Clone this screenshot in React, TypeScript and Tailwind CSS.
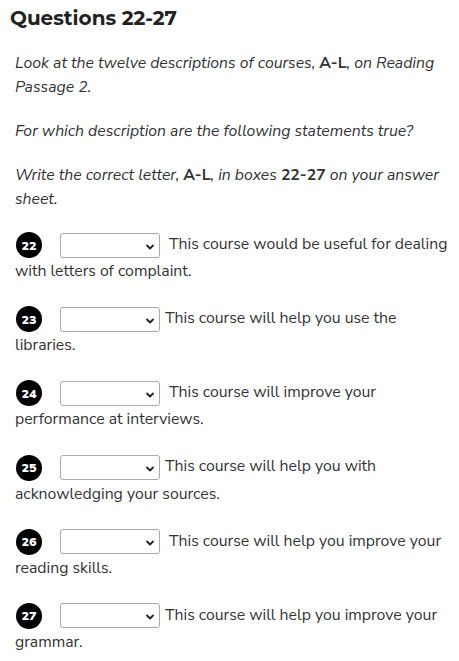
const questions = [
  { n: 22, text: "This course would be useful for dealing with letters of complaint.", gap: "ml-[9px]" },
  { n: 23, text: "This course will help you use the libraries.", gap: "ml-[5px]" },
  { n: 24, text: "This course will improve your performance at interviews.", gap: "ml-[9px]" },
  { n: 25, text: "This course will help you with acknowledging your sources.", gap: "ml-[5px]" },
  { n: 26, text: "This course will help you improve your reading skills.", gap: "ml-[9px]" },
  { n: 27, text: "This course will help you improve your grammar.", gap: "ml-[5px]" },
];

const Chevron = () => (
  <svg width="10" height="10" viewBox="0 0 10 10" className="absolute right-[4px] top-[8px]">
    <path d="M2 3.5 L5 6.5 L8 3.5" fill="none" stroke="#222" strokeWidth="1.8" strokeLinecap="round" strokeLinejoin="round" />
  </svg>
);

export default function App() {
  return (
    <div className="w-[459px] h-[661px] bg-white text-[#333] pl-[15px] pr-[6px] font-['Nunito_Sans','Lato',sans-serif] overflow-hidden">
      <h2 className="-ml-[5px] pt-[4px] text-[20px] leading-[28px] font-bold text-[#222] font-['Montserrat','Open_Sans',sans-serif]">
        Questions 22-27
      </h2>
      <div className="text-[15.8px] leading-[24px]">
        <p className="mt-[19px] italic pr-[8px]">
          Look at the twelve descriptions of courses, <b className="not-italic">A-L</b>, on Reading Passage 2.
        </p>
        <p className="mt-[20px] italic pr-[8px]">For which description are the following statements true?</p>
        <p className="mt-[20px] italic pr-[8px]">
          Write the correct letter, <b className="not-italic">A-L</b>, in boxes <b className="not-italic">22-27</b> on your answer sheet.
        </p>
        <div className="mt-[20px] flex flex-col gap-[20px]">
          {questions.map((q) => (
            <p key={q.n} className="leading-[27px]">
              <span className="inline-flex items-center justify-center w-[26px] h-[26px] rounded-full bg-black text-white text-[12.5px] font-black align-middle mr-[3px] ml-[1px]">
                {q.n}
              </span>
              <span className="relative inline-block align-middle w-[100px] h-[25px] ml-[15px] border border-[#aaa] rounded-[3px] bg-white">
                <Chevron />
              </span>
              <span className={q.gap}>{q.text}</span>
            </p>
          ))}
        </div>
      </div>
    </div>
  );
}
